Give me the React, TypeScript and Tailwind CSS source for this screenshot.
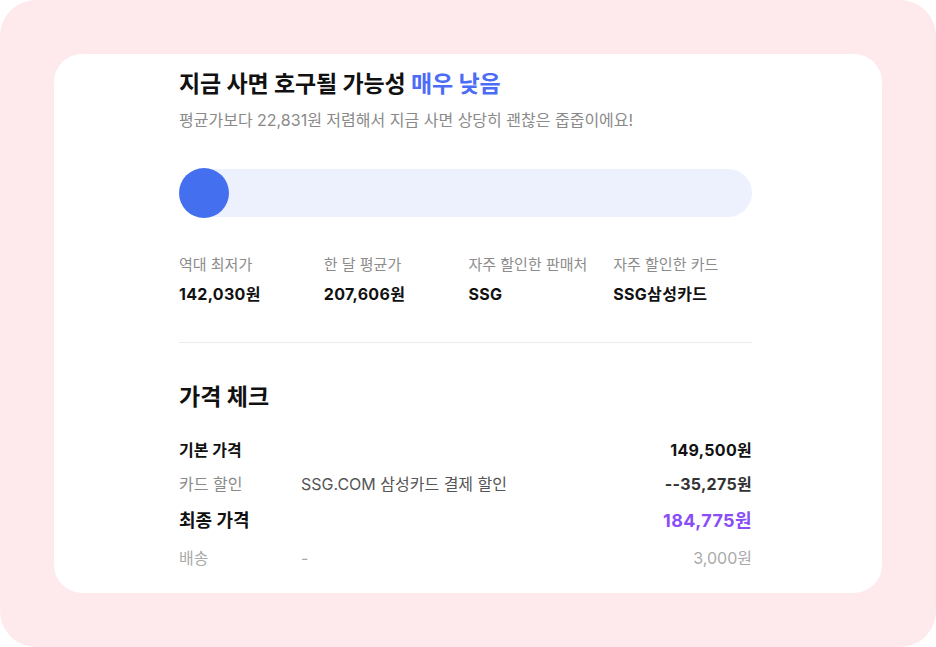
import React from 'react';

const stats = [
  { label: '역대 최저가', value: '142,030원' },
  { label: '한 달 평균가', value: '207,606원' },
  { label: '자주 할인한 판매처', value: 'SSG' },
  { label: '자주 할인한 카드', value: 'SSG삼성카드' },
];

const App: React.FC = () => {
  const percent = 0;

  return (
    <div className="w-[936px] h-[647px] bg-white font-['Inter','Noto_Sans_CJK_KR',sans-serif]">
      <div className="w-full h-full bg-[#fee9ec] rounded-[36px] p-[54px]">
        <div className="w-full h-full bg-white rounded-[28px] pl-[125px] pr-[130px] pt-[15px]">
          {/* 호구 지수 */}
          <h1 className="text-[23px] leading-[30px] font-bold text-[#111] tracking-[-0.1px]">
            지금 사면 호구될 가능성 <span className="text-[#4b6cf6]">매우 낮음</span>
          </h1>
          <p className="mt-[11px] text-[16px] leading-[20px] text-[#8a8a8a]">
            평균가보다 22,831원 저렴해서 지금 사면 상당히 괜찮은 줍줍이에요!
          </p>

          <div className="mt-[39px] h-12 rounded-full bg-[#edf1fd] flex items-center">
            <div
              className="w-[50px] h-[50px] rounded-full bg-[#4470ef] shrink-0"
              style={{ marginLeft: `${percent}%` }}
            />
          </div>

          <div className="mt-[38px] grid grid-cols-4 gap-x-[6px]">
            {stats.map(s => (
              <div key={s.label}>
                <p className="text-[15px] leading-[20px] text-[#8c8c8c]">{s.label}</p>
                <p className="mt-[8px] text-[16px] leading-[22px] font-bold text-[#111] tracking-[0.3px]">{s.value}</p>
              </div>
            ))}
          </div>

          <div className="mt-[37px] h-px bg-[#ececec]" />

          {/* 가격 체크 */}
          <h2 className="mt-[40px] text-[23px] leading-[28px] font-bold text-[#111]">가격 체크</h2>

          <div className="mt-[27px] text-[16px]">
            <div className="h-[34px] flex items-start leading-[24px]">
              <span className="w-[122px] font-bold text-[#111]">기본 가격</span>
              <span className="flex-1" />
              <span className="font-bold text-[#111] tracking-[0.3px]">149,500원</span>
            </div>
            <div className="h-[37px] flex items-start leading-[24px]">
              <span className="w-[122px] text-[#8a8a8a]">카드 할인</span>
              <span className="flex-1 text-[#555]">SSG.COM 삼성카드 결제 할인</span>
              <span className="font-bold text-[#333] tracking-[0.3px]">--35,275원</span>
            </div>
            <div className="h-[37px] flex items-start leading-[24px]">
              <span className="w-[122px] text-[18px] font-bold text-[#111]">최종 가격</span>
              <span className="flex-1" />
              <span className="text-[18px] font-bold text-[#8a4df8] tracking-[0.4px]">184,775원</span>
            </div>
            <div className="flex items-start leading-[24px]">
              <span className="w-[122px] text-[#aaa]">배송</span>
              <span className="flex-1 text-[#aaa]">-</span>
              <span className="text-[#aaa]">3,000원</span>
            </div>
          </div>
        </div>
      </div>
    </div>
  );
};

export default App;
